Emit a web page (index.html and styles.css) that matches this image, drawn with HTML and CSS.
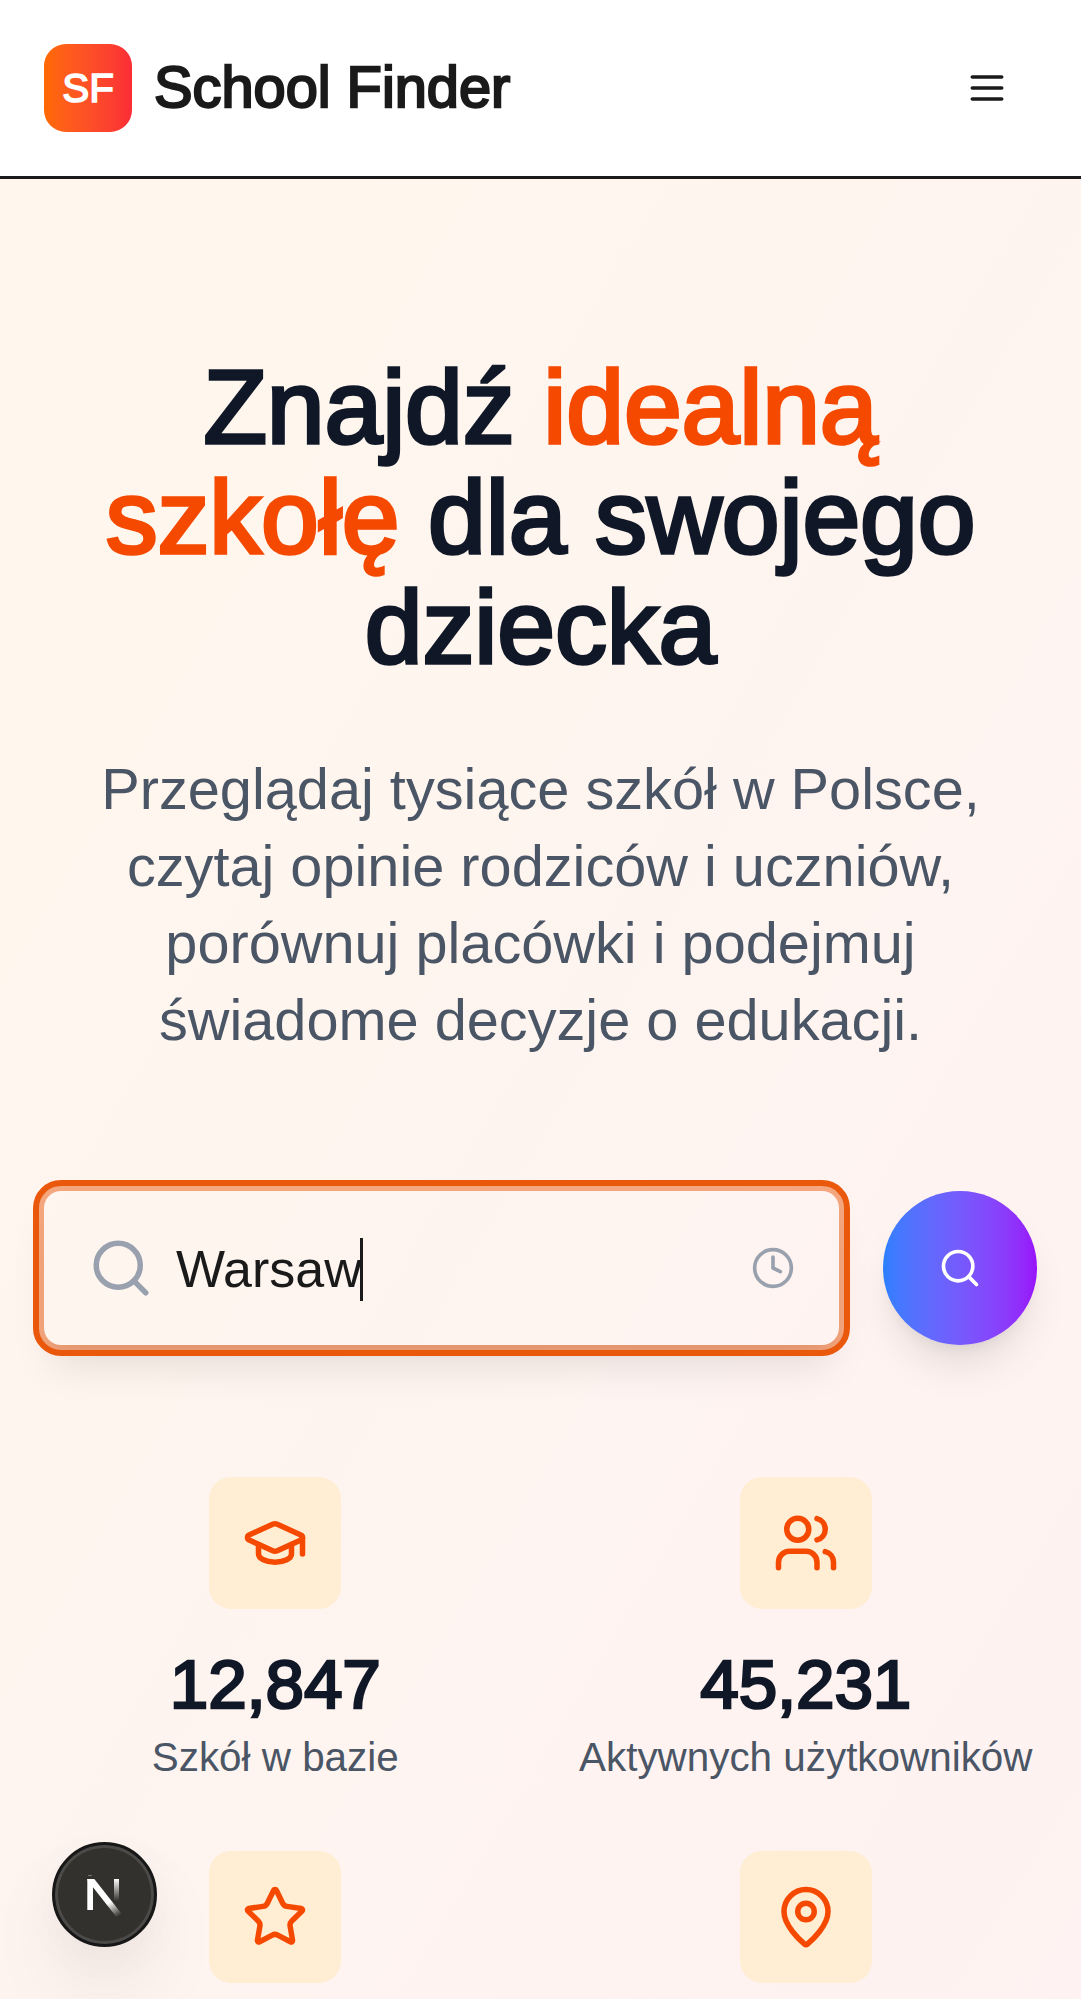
FILE: index.html
```html
<!DOCTYPE html>
<html lang="pl">
<head>
<meta charset="utf-8">
<title>School Finder</title>
<link rel="stylesheet" href="styles.css">
</head>
<body>
<header class="header">
  <a class="brand">
    <span class="brand-logo">SF</span>
    <span class="brand-name">School Finder</span>
  </a>
  <button class="menu-button" aria-label="Menu">
    <svg class="icon icon-sm" viewBox="0 0 24 24"><path d="M4 6h16M4 12h16M4 18h16"/></svg>
  </button>
</header>
<main class="hero">
  <h1 class="title">Znajdź <span class="accent">idealną<br>szkołę</span> dla swojego<br>dziecka</h1>
  <p class="lead">Przeglądaj tysiące szkół w Polsce,<br>czytaj opinie rodziców i uczniów,<br>porównuj placówki i podejmuj<br>świadome decyzje o edukacji.</p>
  <form class="search">
    <div class="field">
      <svg class="icon icon-md" viewBox="0 0 24 24"><circle cx="11" cy="11" r="8"/><path d="m21 21-4.3-4.3"/></svg>
      <span class="field-value">Warsaw</span><span class="caret"></span>
      <svg class="icon icon-sm field-clock" viewBox="0 0 24 24"><circle cx="12" cy="12" r="10"/><path d="M12 6v6l4 2"/></svg>
    </div>
    <button class="submit" type="button" aria-label="Szukaj">
      <svg class="icon icon-sm" viewBox="0 0 24 24"><circle cx="11" cy="11" r="8"/><path d="m21 21-4.3-4.3"/></svg>
    </button>
  </form>
  <section class="stats">
    <div class="stat">
      <div class="tile"><svg class="icon icon-md" viewBox="0 0 24 24"><path d="M21.42 10.922a1 1 0 0 0-.019-1.838L12.83 5.18a2 2 0 0 0-1.66 0L2.6 9.08a1 1 0 0 0 0 1.832l8.57 3.908a2 2 0 0 0 1.66 0z"/><path d="M22 10v6"/><path d="M6 12.5V16a6 3 0 0 0 12 0v-3.5"/></svg></div>
      <div class="number">12,847</div>
      <div class="label">Szkół w bazie</div>
    </div>
    <div class="stat">
      <div class="tile"><svg class="icon icon-md" viewBox="0 0 24 24"><path d="M16 21v-2a4 4 0 0 0-4-4H6a4 4 0 0 0-4 4v2"/><path d="M16 3.128a4 4 0 0 1 0 7.744"/><path d="M22 21v-2a4 4 0 0 0-3-3.87"/><circle cx="9" cy="7" r="4"/></svg></div>
      <div class="number">45,231</div>
      <div class="label">Aktywnych użytkowników</div>
    </div>
    <div class="stat">
      <div class="tile"><svg class="icon icon-md" viewBox="0 0 24 24"><path d="M11.525 2.295a.53.53 0 0 1 .95 0l2.31 4.679a2.123 2.123 0 0 0 1.595 1.16l5.166.756a.53.53 0 0 1 .294.904l-3.736 3.638a2.123 2.123 0 0 0-.611 1.878l.882 5.14a.53.53 0 0 1-.771.56l-4.618-2.428a2.122 2.122 0 0 0-1.973 0L6.396 21.01a.53.53 0 0 1-.77-.56l.881-5.139a2.122 2.122 0 0 0-.611-1.879L2.16 9.795a.53.53 0 0 1 .294-.906l5.165-.755a2.122 2.122 0 0 0 1.597-1.16z"/></svg></div>
    </div>
    <div class="stat">
      <div class="tile"><svg class="icon icon-md" viewBox="0 0 24 24"><path d="M20 10c0 4.993-5.539 10.193-7.399 11.799a1 1 0 0 1-1.202 0C9.539 20.193 4 14.993 4 10a8 8 0 0 1 16 0"/><circle cx="12" cy="10" r="3"/></svg></div>
    </div>
  </section>
</main>
<div class="dev-badge">
  <svg class="dev-mark" viewBox="0 0 105 105">
    <defs>
      <linearGradient id="diagonal" gradientUnits="userSpaceOnUse" x1="58" y1="60" x2="67" y2="74"><stop offset="0" stop-color="#fff"/><stop offset="1" stop-color="#fff" stop-opacity="0"/></linearGradient>
      <linearGradient id="bar" gradientUnits="userSpaceOnUse" x1="0" y1="37" x2="0" y2="59"><stop offset="0" stop-color="#fff"/><stop offset="1" stop-color="#fff" stop-opacity="0"/></linearGradient>
    </defs>
    <path d="M35.300 37h5.700v31h-5.700z" fill="#fff"/>
    <path d="M35.300 37h7l27.500 35-5 3.500L35.300 38z" fill="url(#diagonal)"/>
    <path d="M62 37h5v22h-5z" fill="url(#bar)"/>
    <path d="M36 33.500h4" stroke="#77757a" stroke-width="1"/>
  </svg>
</div>
</body>
</html>
```
FILE: styles.css
```css
* { box-sizing: border-box; }

body {
  margin: 0;
  height: 1999px;
  position: relative;
  display: flex;
  flex-direction: column;
  font-family: "Liberation Sans", Arial, sans-serif;
  color: #1a1a1a;
  background: #fff;
}

button { border: 0; padding: 0; background: none; color: inherit; }

.icon {
  display: block;
  flex: none;
  fill: none;
  stroke: currentColor;
  stroke-width: 2;
  stroke-linecap: round;
  stroke-linejoin: round;
}
.icon-sm { width: 44px; height: 44px; }
.icon-md { width: 66px; height: 66px; }

.header {
  flex: none;
  height: 179px;
  padding: 0 44px;
  border-bottom: 3px solid #1a1a1a;
  display: flex;
  align-items: center;
  justify-content: space-between;
}
.brand { display: flex; align-items: center; gap: 22px; }
.brand-logo {
  width: 88px;
  height: 88px;
  border-radius: 22px;
  display: flex;
  align-items: center;
  justify-content: center;
  color: #fff;
  font-size: 40.400px;
  -webkit-text-stroke: 1.600px currentColor;
  background: linear-gradient(to right in oklab, #ff6900, #fb2c36);
}
.brand-name {
  padding-bottom: 2px;
  font-size: 57.750px;
  line-height: 77px;
  -webkit-text-stroke: 2.300px currentColor;
}
.menu-button { padding: 22px 28px; }

.hero {
  flex: 1;
  padding: 173px 44px 0;
  background: linear-gradient(to bottom right in oklab, #fff7ed, #fef2f2);
}
.title {
  margin: 0 0 69px;
  text-align: center;
  font-weight: 400;
  font-size: 103.950px;
  line-height: 110px;
  letter-spacing: -0.150px;
  color: #101828;
  -webkit-text-stroke: 3.500px currentColor;
}
.accent { color: #f54900; }
.lead {
  margin: 0 0 131.750px;
  text-align: center;
  font-size: 57.700px;
  line-height: 77px;
  color: #4a5565;
}

.search { display: flex; gap: 44px; margin: 0; }
.field {
  flex: 1;
  height: 154px;
  padding: 0 44px;
  display: flex;
  align-items: center;
  border-radius: 17px;
  outline: 6px solid #ea580c;
  outline-offset: 5px;
  box-shadow:
    0 0 0 5.500px rgba(234, 88, 12, 0.5),
    0 27.500px 41.250px -8.250px rgba(0, 0, 0, 0.1),
    0 11px 16.500px -11px rgba(0, 0, 0, 0.1);
}
.field .icon { color: #99a1af; }
.field-value {
  margin-left: 22px;
  padding-top: 4px;
  font-size: 51.980px;
  line-height: 77px;
}
.caret { width: 3px; height: 63px; margin-top: 3px; margin-left: -2px; background: #1a1a1a; }
.field-clock { margin-left: auto; }
.submit {
  flex: none;
  width: 154px;
  height: 154px;
  border-radius: 50%;
  display: flex;
  align-items: center;
  justify-content: center;
  color: #fff;
  background: linear-gradient(to right in oklab, #2b7fff, #9810fa);
  box-shadow:
    0 27.500px 41.250px -8.250px rgba(0, 0, 0, 0.1),
    0 11px 16.500px -11px rgba(0, 0, 0, 0.1);
}

.stats {
  margin-top: 132px;
  display: grid;
  grid-template-columns: repeat(2, minmax(0, 1fr));
  column-gap: 68px;
  row-gap: 66px;
}
.stat { display: flex; flex-direction: column; align-items: center; }
.tile {
  width: 132px;
  height: 132px;
  border-radius: 22px;
  display: flex;
  align-items: center;
  justify-content: center;
  color: #f54900;
  background: #ffedd4;
}
.number {
  margin: 31px 0 1px;
  font-size: 69.300px;
  line-height: 88px;
  letter-spacing: -0.200px;
  color: #101828;
  -webkit-text-stroke: 2.600px currentColor;
}
.label {
  font-size: 40.400px;
  line-height: 56px;
  white-space: nowrap;
  color: #4a5565;
}

.dev-badge {
  position: absolute;
  left: 52px;
  top: 1842px;
  width: 105px;
  height: 105px;
  border-radius: 50%;
  background: #32312e;
  border: 3px solid #171717;
  box-shadow:
    inset 0 0 0 3px #4b4a48,
    0 44px 88px -22px rgba(0, 0, 0, 0.18),
    0 11px 44px rgba(0, 0, 0, 0.03);
}
.dev-mark { display: block; width: 105px; height: 105px; margin: -3px; }
```
